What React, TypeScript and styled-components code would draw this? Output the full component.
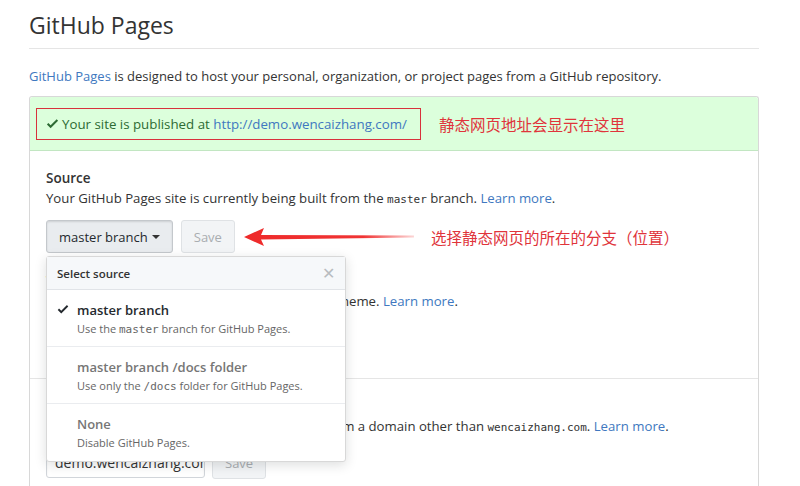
import React from "react";
import styled, { createGlobalStyle } from "styled-components";

const Global = createGlobalStyle`
  html, body { margin: 0; padding: 0; background: #fff; }
  body {
    font-family: "Open Sans", "Noto Sans", "Noto Sans CJK SC", sans-serif;
    color: #333;
    font-size: 13px;
    overflow: hidden;
  }
`;

const Page = styled.div`
  width: 730px;
  padding: 10px 0 0 29px;
`;

const Title = styled.h2`
  margin: 0;
  font-size: 23px;
  font-weight: 400;
  line-height: 30px;
  padding-bottom: 8px;
  border-bottom: 1px solid #e5e5e5;
  color: #333;
`;

const Lead = styled.p`
  margin: 17px 0 10px;
  line-height: 20px;
`;

const Link = styled.a`
  color: #4078c0;
  text-decoration: none;
`;

const Box = styled.div`
  border: 1px solid #d8d8d8;
  border-radius: 3px;
  border-bottom: none;
`;

const Flash = styled.div`
  display: flex;
  align-items: center;
  height: 53px;
  padding-left: 6px;
  background: #dcffdc;
  border-bottom: 1px solid #c2e6c2;
  border-radius: 3px 3px 0 0;
`;

const Mark = styled.div`
  display: flex;
  align-items: center;
  gap: 3px;
  width: 374px;
  height: 30px;
  padding-left: 9px;
  border: 1px solid #d8323c;
  color: #2d6b33;
  font-size: 13.3px;
`;

const Note = styled.span<{ $ml: number }>`
  font-family: "Noto Sans CJK SC", sans-serif;
  font-size: 15.5px;
  color: #e0343b;
  margin-left: ${(p) => p.$ml}px;
`;

const Section = styled.div<{ $h: number; $last?: boolean }>`
  height: ${(p) => p.$h}px;
  padding: 18px 16px 0;
  box-sizing: border-box;
  border-bottom: ${(p) => (p.$last ? "none" : "1px solid #e5e5e5")};
  position: relative;
`;

const Heading = styled.div<{ $mt?: number }>`
  font-size: 13.5px;
  font-weight: 600;
  line-height: 18px;
  margin-top: ${(p) => p.$mt ?? 0}px;
`;

const Text = styled.div`
  line-height: 20px;
  margin-top: 1px;
  font-size: 13.2px;
`;

const Code = styled.code`
  font-family: "DejaVu Sans Mono", monospace;
  font-size: 11px;
`;

const Row = styled.div<{ $mt?: number }>`
  display: flex;
  align-items: center;
  margin-top: ${(p) => p.$mt ?? 10}px;
  position: relative;
`;

const Button = styled.button<{ $pressed?: boolean; $disabled?: boolean }>`
  font-family: inherit;
  font-size: 13px;
  height: 33px;
  padding: 0 12px;
  border-radius: 3px;
  border: 1px solid ${(p) => (p.$disabled ? "#dfe2e5" : "#c4c8cc")};
  background: ${(p) =>
    p.$pressed ? "#e9ecef" : p.$disabled ? "#f2f4f6" : "linear-gradient(#fafbfc, #eff3f6)"};
  box-shadow: ${(p) => (p.$pressed ? "inset 0 1px 2px rgba(0,0,0,.12)" : "none")};
  color: ${(p) => (p.$disabled ? "#a9adb1" : "#24292e")};
  display: flex;
  align-items: center;
  gap: 4px;
  margin-right: 8px;
`;

const Caret = styled.span`
  width: 0;
  height: 0;
  border-left: 4px solid transparent;
  border-right: 4px solid transparent;
  border-top: 4px solid #333;
  margin-top: 1px;
`;

const Input = styled.div`
  border: 1px solid #d1d5da;
  border-radius: 3px;
  font-size: 14px;
  line-height: 29px;
  padding-left: 8px;
  box-sizing: border-box;
  width: 159px;
  height: 31px;
  overflow: hidden;
  white-space: nowrap;
  margin-right: 7px;
  box-shadow: inset 0 1px 2px rgba(27,31,35,.075);
`;

const Menu = styled.div`
  position: absolute;
  left: 0;
  top: 36px;
  width: 300px;
  box-sizing: border-box;
  background: #fff;
  border: 1px solid #d8d8d8;
  border-radius: 3px;
  box-shadow: 0 3px 12px rgba(27,31,35,.15);
  z-index: 5;
`;

const MenuHeader = styled.div`
  display: flex;
  justify-content: space-between;
  align-items: center;
  height: 32px;
  padding: 0 10px;
  background: #f6f8fa;
  border-bottom: 1px solid #e1e4e8;
  font-size: 11.5px;
  font-weight: 600;
`;

const Close = styled.span`
  color: #b8bcc0;
  font-size: 16px;
  font-weight: 300;
`;

const Item = styled.div<{ $muted?: boolean; $last?: boolean }>`
  position: relative;
  padding: 10px 10px 0 30px;
  height: 57px;
  box-sizing: border-box;
  border-bottom: ${(p) => (p.$last ? "none" : "1px solid #eaecef")};
  color: ${(p) => (p.$muted ? "#767676" : "#24292e")};
`;

const ItemTitle = styled.div`
  font-size: 13px;
  font-weight: 600;
  line-height: 20px;
`;

const ItemDesc = styled.div`
  font-size: 11px;
  line-height: 18px;
  color: #666;
`;

const Check = styled.svg`
  position: absolute;
  left: 10px;
  top: 12px;
`;

const checkPath = "M12 5l-8 8-4-4 1.5-1.5L4 10l6.5-6.5L12 5z";

export default function App() {
  return (
    <>
      <Global />
      <Page>
        <Title>GitHub Pages</Title>
        <Lead>
          <Link>GitHub Pages</Link> is designed to host your personal, organization, or project pages from a
          GitHub repository.
        </Lead>
        <Box>
          <Flash>
            <Mark>
              <svg width="13" height="13" viewBox="0 1 12 14">
                <path d={checkPath} fill="#2d6b33" />
              </svg>
              <span>
                Your site is published at <Link>http://demo.wencaizhang.com/</Link>
              </span>
            </Mark>
            <Note $ml={18}>静态网页地址会显示在这里</Note>
          </Flash>
          <Section $h={228}>
            <Heading>Source</Heading>
            <Text>
              Your GitHub Pages site is currently being built from the <Code>master</Code> branch.{" "}
              <Link>Learn more</Link>.
            </Text>
            <Row>
              <Button $pressed>
                master branch <Caret />
              </Button>
              <Button $disabled>Save</Button>
              <svg width="172" height="20" viewBox="0 0 172 20" style={{ marginLeft: 1 }}>
                <defs>
                  <linearGradient id="ag" x1="0" x2="1" y1="0" y2="0">
                    <stop offset="0" stopColor="#ee2a2a" />
                    <stop offset="0.7" stopColor="#f03434" />
                    <stop offset="1" stopColor="#f03434" stopOpacity="0.2" />
                  </linearGradient>
                </defs>
                <path d="M0 10 L20 1 L17 8 L170 8.5 L170 10.5 L17 12.5 L20 19 Z" fill="url(#ag)" />
              </svg>
              <Note $ml={15}>选择静态网页的所在的分支（位置）</Note>
              <Menu>
                <MenuHeader>
                  <span>Select source</span>
                  <Close>✕</Close>
                </MenuHeader>
                <Item>
                  <Check width="12" height="14" viewBox="0 0 12 16">
                    <path d={checkPath} fill="#24292e" />
                  </Check>
                  <ItemTitle>master branch</ItemTitle>
                  <ItemDesc>
                    Use the <Code>master</Code> branch for GitHub Pages.
                  </ItemDesc>
                </Item>
                <Item $muted>
                  <ItemTitle>master branch /docs folder</ItemTitle>
                  <ItemDesc>
                    Use only the <Code>/docs</Code> folder for GitHub Pages.
                  </ItemDesc>
                </Item>
                <Item $muted $last>
                  <ItemTitle>None</ItemTitle>
                  <ItemDesc>Disable GitHub Pages.</ItemDesc>
                </Item>
              </Menu>
            </Row>
            <Heading $mt={19}>Theme chooser</Heading>
            <Text>
              Select a theme to publish your site with a Jekyll theme. <Link>Learn more</Link>.
            </Text>
            <Row>
              <Button>Choose a theme</Button>
            </Row>
          </Section>
          <Section $h={120} $last>
            <Heading>Custom domain</Heading>
            <Text>
              Custom domains allow you to serve your site from a domain other than <Code>wencaizhang.com</Code>.{" "}
              <Link>Learn more</Link>.
            </Text>
            <Row $mt={8}>
              <Input>demo.wencaizhang.com</Input>
              <Button $disabled>Save</Button>
            </Row>
          </Section>
        </Box>
      </Page>
    </>
  );
}
